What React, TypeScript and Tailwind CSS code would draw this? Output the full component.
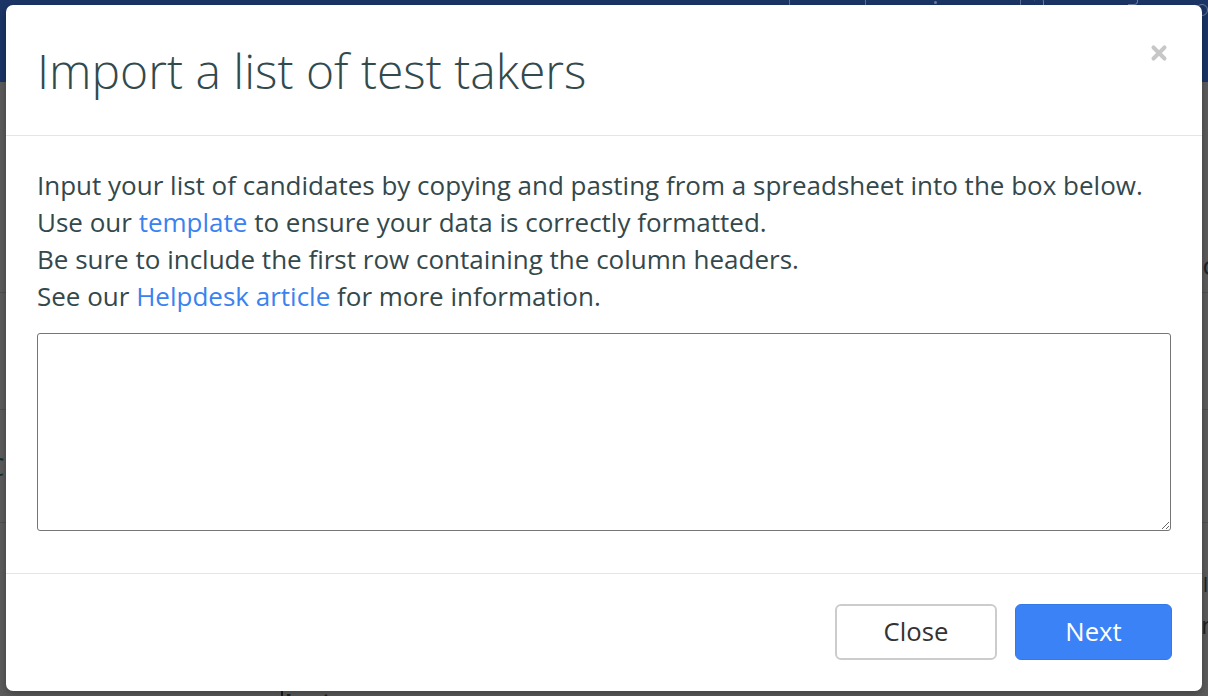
import { X } from "lucide-react";

function BackgroundPage() {
  return (
    <div className="absolute inset-0 bg-[#5c5c5c] flex flex-col overflow-hidden">
      {/* top navigation bar, dimmed by the backdrop */}
      <div className="h-[82px] shrink-0 bg-[#1b3566] flex items-start pl-[789px]">
        <span className="w-[77px] h-[8px] border-l border-[#5f7196]" />
        <span className="w-[156px] h-[8px] border-l border-[#5f7196] flex justify-end pr-[83px]">
          <span className="mt-[1px] w-[3px] h-[3px] rounded-full bg-[#6f7f9e]" />
        </span>
        <span className="w-[109px] h-[8px] border-l border-[#5f7196] flex pl-[13px]">
          <span className="mt-[-3px] w-[10px] h-[8px] rounded-t-full border-t border-r border-[#6f7f9e]" />
        </span>
        <span className="w-[69px] h-[8px] flex">
          <span className="mt-[-3px] w-[10px] h-[8px] rounded-r-full border-y border-r border-[#6f7f9e]" />
        </span>
        <span className="mt-[4px] w-[12px] h-[12px] shrink-0 rounded-full border border-[#6f7f9e]" />
      </div>
      <div className="h-[211px] shrink-0 border-b border-[#4f4f4f] flex items-end justify-end pb-[14px]">
        <span className="mr-[-7px] text-[26px] leading-none text-[#222]">c</span>
      </div>
      <div className="h-[117px] shrink-0 border-b border-[#4f4f4f]" />
      <div className="h-[113px] shrink-0 border-b border-[#4f4f4f] flex items-center">
        <span className="ml-[-12px] text-[26px] leading-none text-[#14302e]">C</span>
      </div>
      <div className="flex-1 flex flex-col">
        <div className="flex justify-end pt-[52px]">
          <span className="text-[20px] leading-none text-[#222]">l</span>
        </div>
        <div className="flex justify-end pt-[18px]">
          <span className="mr-[-8px] text-[24px] leading-none text-[#222]">n</span>
        </div>
        <div className="mt-auto flex items-start gap-[2px] pl-[281px] h-[7px]">
          <span className="w-[2px] h-[10px] bg-[#1a1a1a]" />
          <span className="text-[22px] font-bold text-[#1f1f1f] leading-none">Last name</span>
        </div>
      </div>
    </div>
  );
}

export default function App() {
  return (
    <div
      className="relative w-[1208px] h-[696px] overflow-hidden"
      style={{ fontFamily: '"Open Sans", "Noto Sans", sans-serif' }}
    >
      <BackgroundPage />

      <div className="absolute left-[6px] top-[5px] w-[1196px] h-[686px] bg-white rounded-[7px] flex flex-col shadow-[0_3px_9px_rgba(0,0,0,0.3)]">
        <div className="h-[131px] shrink-0 pl-[31px] pr-[32px] flex items-start justify-between border-b border-[#e5e5e5]">
          <h4 className="mt-[36px] text-[48px] leading-[60px] font-light text-[#334a4d]">
            Import a list of test takers
          </h4>
          <button className="mt-[37px] w-[22px] h-[22px] flex items-center justify-center text-[#c7c7c7]">
            <X className="w-[24px] h-[24px]" strokeWidth={4.4} />
          </button>
        </div>

        <div className="flex-1 px-[31px] pt-[31px] pb-[41px] flex flex-col">
          <div className="text-[26px] leading-[37px] text-[#34484b]">
            <p>Input your list of candidates by copying and pasting from a spreadsheet into the box below.</p>
            <p>
              Use our <a className="text-[#3a82f0]">template</a> to ensure your data is correctly formatted.
            </p>
            <p>Be sure to include the first row containing the column headers.</p>
            <p>
              See our <a className="text-[#3a82f0]">Helpdesk article</a> for more information.
            </p>
          </div>
          <textarea className="mt-[18px] w-full h-[198px] border border-[#767676] rounded-[3px] resize-y outline-none p-2 text-[24px] text-[#34484b]" />
        </div>

        <div className="h-[118px] shrink-0 border-t border-[#e5e5e5] px-[30px] flex items-start justify-end gap-[18px] pt-[30px]">
          <button className="w-[162px] h-[56px] rounded-[6px] border-2 border-[#cccccc] bg-white text-[25.7px] text-[#333333]">
            Close
          </button>
          <button className="w-[157px] h-[56px] rounded-[6px] bg-[#3b82f6] border border-[#3579e6] text-[25.7px] text-white">
            Next
          </button>
        </div>
      </div>
    </div>
  );
}
